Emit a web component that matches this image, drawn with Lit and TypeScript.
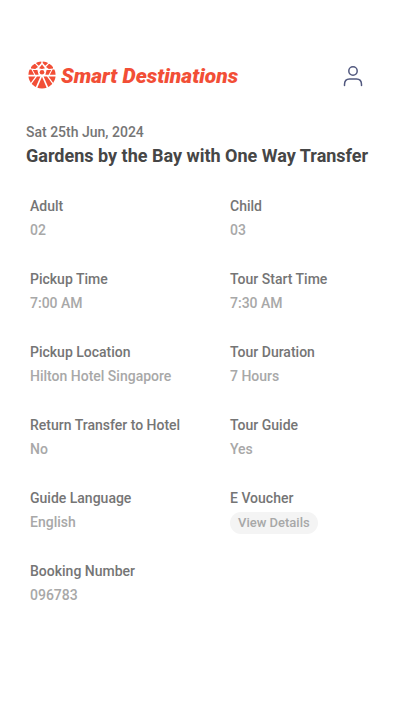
import { LitElement, html, css } from "lit";
import { customElement } from "lit/decorators.js";

interface Detail {
  label: string;
  value: string;
  action?: boolean;
}

const details: Detail[] = [
  { label: "Adult", value: "02" },
  { label: "Child", value: "03" },
  { label: "Pickup Time", value: "7:00 AM" },
  { label: "Tour Start Time", value: "7:30 AM" },
  { label: "Pickup Location", value: "Hilton Hotel Singapore" },
  { label: "Tour Duration", value: "7 Hours" },
  { label: "Return Transfer to Hotel", value: "No" },
  { label: "Tour Guide", value: "Yes" },
  { label: "Guide Language", value: "English" },
  { label: "E Voucher", value: "View Details", action: true },
  { label: "Booking Number", value: "096783" },
];

@customElement("app-root")
export class AppRoot extends LitElement {
  static styles = css`
    :host {
      display: block;
      min-height: 100vh;
      box-sizing: border-box;
      padding: 60px 26px 40px;
      background: #fff;
      color: #757575;
      font: 500 14px/24px Roboto, sans-serif;
    }
    header {
      display: flex;
      align-items: center;
      justify-content: space-between;
      height: 32px;
    }
    .brand {
      display: flex;
      align-items: center;
      gap: 5px;
      padding-left: 2px;
      color: #f24e36;
      font: italic 900 21px/32px Roboto, sans-serif;
      text-decoration: none;
      white-space: nowrap;
    }
    .brand svg {
      margin-bottom: 2px;
    }
    .profile {
      display: block;
      padding: 0;
      margin-right: 11px;
      border: 0;
      background: none;
      cursor: pointer;
    }
    svg {
      display: block;
    }
    .date {
      margin: 28px 0 0;
    }
    h1 {
      margin: 0;
      color: #464646;
      font: 700 18px/24px Roboto, sans-serif;
    }
    dl {
      display: grid;
      grid-template-columns: repeat(2, minmax(0, 1fr));
      column-gap: 60px;
      row-gap: 25px;
      margin: 26px 4px 0;
    }
    dt,
    dd {
      margin: 0;
      white-space: nowrap;
    }
    dd {
      color: #a8a8a8;
    }
    .pill {
      display: block;
      height: 22px;
      margin-top: 2px;
      padding: 0 8px;
      border: 0;
      border-radius: 11px;
      background: #f4f4f4;
      color: #a8a8a8;
      font: 500 13px/22px Roboto, sans-serif;
      cursor: pointer;
    }
  `;

  render() {
    return html`
      <header>
        <a class="brand" href="#">
          <svg width="28" height="28" viewBox="0 0 28 28" aria-hidden="true">
            <defs>
              <clipPath id="disc"><circle cx="14" cy="14" r="13.6" /></clipPath>
            </defs>
            <g clip-path="url(#disc)" fill="#f24e36">
              <path d="M8.5 0H13.3V2L10.8 4.8L8.2 2.6ZM19.5 0H14.7V2L17.2 4.8L19.8 2.6Z" />
              <path d="M14 3.4L17 7.2L14 8L11 7.2ZM7 2.8L10 6L7.2 8L3 7.4V4ZM21 2.8L18 6L20.8 8L25 7.4V4Z" />
              <path d="M0 8.6H3.4L6.2 13.8H0ZM28 8.6H24.6L21.8 13.8H28Z" />
              <path d="M4.8 9H9.4L10.6 13.8H7.4ZM23.2 9H18.6L17.4 13.8H20.6Z" />
              <circle cx="14" cy="11.3" r="2.3" />
              <path d="M0 15.4H7.4L2 23H0ZM28 15.4H20.6L26 23H28Z" />
              <path d="M9 15.4H12.4L7.4 27L2.8 24ZM19 15.4H15.6L20.6 27L25.2 24Z" />
              <path d="M14 15.8L19.2 28H8.8Z" />
            </g>
          </svg>
          Smart Destinations
        </a>
        <button class="profile" aria-label="Profile">
          <svg width="20" height="22" viewBox="0 0 20 22" fill="none" stroke="#52597f" stroke-width="1.5" stroke-linecap="round">
            <circle cx="10" cy="6" r="4.2" />
            <path d="M1.5 20.5V19.5C1.5 16 3.5 14 6.5 14H13.5C16.5 14 18.5 16 18.5 19.5V20.5" />
          </svg>
        </button>
      </header>
      <main>
        <p class="date">Sat 25th Jun, 2024</p>
        <h1>Gardens by the Bay with One Way Transfer</h1>
        <dl>
          ${details.map(
            (d) => html`<div>
              <dt>${d.label}</dt>
              <dd>${d.action ? html`<button class="pill">${d.value}</button>` : d.value}</dd>
            </div>`
          )}
        </dl>
      </main>
    `;
  }
}
